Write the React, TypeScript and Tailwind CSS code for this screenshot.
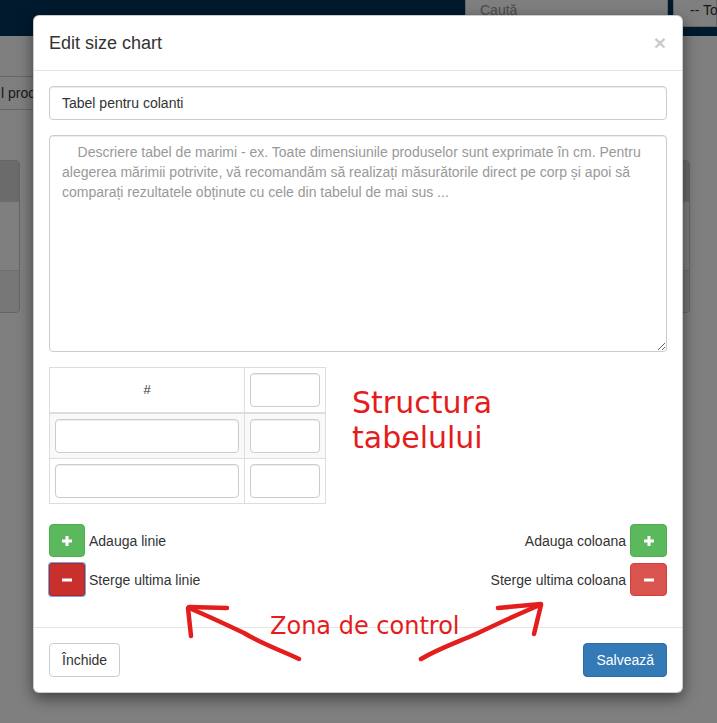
import type { ReactNode } from "react";

function PlusIcon() {
  return (
    <svg width="10" height="10" viewBox="0 0 10 10" fill="#fff">
      <rect x="3.5" y="0" width="3" height="10" />
      <rect x="0" y="3.5" width="10" height="3" />
    </svg>
  );
}

function MinusIcon() {
  return (
    <svg width="10" height="10" viewBox="0 0 10 10" fill="#fff">
      <rect x="0" y="3.5" width="10" height="3" />
    </svg>
  );
}

function BackgroundPage() {
  return (
    <div className="flex flex-col">
      {/* navbar */}
      <div className="flex h-9 justify-end bg-[#03345c]">
        <div className="-mt-[7px] flex h-[34px] w-[203px] items-center rounded-b-[3px] border border-[#ccc] bg-white px-[14px] text-[#999]">
          Caută
        </div>
        <div className="-mt-[7px] ml-[5px] flex h-[34px] w-[44px] items-center border border-[#ccc] bg-white pl-[16px] whitespace-nowrap">
          -- Toate
        </div>
      </div>

      {/* toolbar row */}
      <div className="mt-[40px] flex h-[34px] w-[200px] items-center border-y border-[#ccc] pl-px whitespace-nowrap">
        l produse
      </div>

      {/* cards */}
      <div className="mt-[50px] flex justify-between">
        <div className="-ml-[100px] w-[120px] overflow-hidden rounded-[4px] border border-[#ccc]">
          <div className="h-[40px] bg-[#d6d6d6]" />
          <div className="h-[69px] border-t border-[#ddd] bg-white" />
          <div className="h-[42px] border-t border-[#ddd] bg-[#eee]" />
        </div>
        <div className="mr-[27px] w-[100px] overflow-hidden rounded-[4px] border border-[#ccc]">
          <div className="h-[40px] bg-[#d6d6d6]" />
          <div className="h-[69px] border-t border-[#ddd] bg-white" />
          <div className="h-[42px] border-t border-[#ddd] bg-[#eee]" />
        </div>
      </div>
    </div>
  );
}

function TextInput({ className = "", value }: { className?: string; value?: string }) {
  return (
    <div
      className={`flex h-[34px] items-center rounded-[4px] border border-[#ccc] bg-white px-[12px] shadow-[inset_0_1px_1px_rgba(0,0,0,0.075)] ${className}`}
    >
      {value}
    </div>
  );
}

function ControlRow({
  leftButton,
  leftLabel,
  rightLabel,
  rightButton,
}: {
  leftButton: ReactNode;
  leftLabel: string;
  rightLabel: string;
  rightButton: ReactNode;
}) {
  return (
    <div className="flex items-center justify-between">
      <div className="flex items-center gap-[4px]">
        {leftButton}
        <span>{leftLabel}</span>
      </div>
      <div className="flex items-center gap-[4px]">
        <span>{rightLabel}</span>
        {rightButton}
      </div>
    </div>
  );
}

function SizeChartModal() {
  const description =
    "    Descriere tabel de marimi - ex. Toate dimensiunile produselor sunt exprimate în cm. Pentru alegerea mărimii potrivite, vă recomandăm să realizați măsurătorile direct pe corp și apoi să comparați rezultatele obținute cu cele din tabelul de mai sus ...";

  return (
    <div className="absolute left-[33px] top-[15px] w-[650px] rounded-[6px] border border-black/20 bg-white shadow-[0_5px_15px_rgba(0,0,0,0.5)]">
      {/* header */}
      <div className="flex items-start justify-between border-b border-[#e5e5e5] p-[15px]">
        <h4 className="text-[18px] leading-[24px]">Edit size chart</h4>
        <button className="mt-[2px] mr-px text-[21px] leading-[20px] font-bold text-black opacity-20">×</button>
      </div>

      {/* body */}
      <div className="px-[15px] pt-[15px] pb-[31px]">
        <TextInput className="w-full" value="Tabel pentru colanti" />

        <textarea
          className="mt-[15px] block h-[217px] w-full rounded-[4px] border border-[#ccc] px-[12px] py-[6px] whitespace-pre-wrap shadow-[inset_0_1px_1px_rgba(0,0,0,0.075)] placeholder:text-[#999] focus:outline-none"
          placeholder={description}
        />

        <div className="mt-[15px] flex items-start">
          <table className="border-collapse">
            <tbody>
              <tr>
                <th className="w-[194px] border border-b-2 border-[#ddd] p-[5px] text-center align-middle text-[13px] font-normal">
                  #
                </th>
                <td className="border border-b-2 border-[#ddd] p-[5px]">
                  <TextInput className="w-[70px]" />
                </td>
              </tr>
              <tr className="bg-[#f9f9f9]">
                <td className="border border-[#ddd] p-[5px]">
                  <TextInput className="w-[184px]" />
                </td>
                <td className="border border-[#ddd] p-[5px]">
                  <TextInput className="w-[70px]" />
                </td>
              </tr>
              <tr>
                <td className="border border-[#ddd] p-[5px]">
                  <TextInput className="w-[184px]" />
                </td>
                <td className="border border-[#ddd] p-[5px]">
                  <TextInput className="w-[70px]" />
                </td>
              </tr>
            </tbody>
          </table>

          <div className="mt-[18px] ml-[26px] font-['DejaVu_Sans',sans-serif] text-[30px] leading-[35px] text-[#e51c1c]">
            Structura
            <br />
            tabelului
          </div>
        </div>

        {/* controls */}
        <div className="mt-[20px] flex flex-col gap-[6px]">
          <ControlRow
            leftButton={
              <button className="flex h-[33px] w-[36px] items-center justify-center rounded-[4px] border border-[#4cae4c] bg-[#5cb85c]">
                <PlusIcon />
              </button>
            }
            leftLabel="Adauga linie"
            rightLabel="Adauga coloana"
            rightButton={
              <button className="flex h-[33px] w-[37px] items-center justify-center rounded-[4px] border border-[#4cae4c] bg-[#5cb85c]">
                <PlusIcon />
              </button>
            }
          />
          <ControlRow
            leftButton={
              <button className="flex h-[33px] w-[36px] items-center justify-center rounded-[3px] border border-[#ac2925] bg-[#c9302c] ring-1 ring-[#7aa6e8]">
                <MinusIcon />
              </button>
            }
            leftLabel="Sterge ultima linie"
            rightLabel="Sterge ultima coloana"
            rightButton={
              <button className="flex h-[33px] w-[37px] items-center justify-center rounded-[4px] border border-[#d43f3a] bg-[#d9534f]">
                <MinusIcon />
              </button>
            }
          />
        </div>
      </div>

      {/* footer */}
      <div className="flex items-center justify-between border-t border-[#e5e5e5] p-[15px]">
        <button className="h-[34px] rounded-[4px] border border-[#ccc] bg-white px-[12px]">Închide</button>
        <button className="h-[34px] rounded-[4px] border border-[#2e6da4] bg-[#337ab7] px-[12px] text-white">Salvează</button>
      </div>
    </div>
  );
}

function Annotations() {
  return (
    <>
      <svg
        className="pointer-events-none absolute inset-0"
        width="717"
        height="723"
        viewBox="0 0 717 723"
        fill="none"
        stroke="#e41d1d"
        strokeWidth="4.5"
        strokeLinecap="round"
        strokeLinejoin="round"
      >
        {/* left arrow */}
        <path d="M299 659 C 280 650, 262 644, 244 633 C 225 624, 208 616, 189 608" />
        <path d="M189 607 L227 608" />
        <path d="M188 608 L191 636" />
        {/* right arrow */}
        <path d="M421 659 C 440 648, 458 642, 476 634 C 497 624, 518 614, 540 605" />
        <path d="M498 608 L541 604" />
        <path d="M541 605 L534 634" />
      </svg>
      <div className="pointer-events-none absolute top-[614px] left-[270px] font-['DejaVu_Sans',sans-serif] text-[24px] leading-[24px] whitespace-nowrap text-[#e51c1c]">
        Zona de control
      </div>
    </>
  );
}

export default function App() {
  return (
    <div className="relative h-[723px] w-[717px] overflow-hidden bg-white font-['Liberation_Sans',Arial,sans-serif] text-[14px] leading-[20px] text-[#333]">
      <BackgroundPage />
      <div className="absolute inset-0 bg-black/50" />
      <SizeChartModal />
      <Annotations />
    </div>
  );
}
